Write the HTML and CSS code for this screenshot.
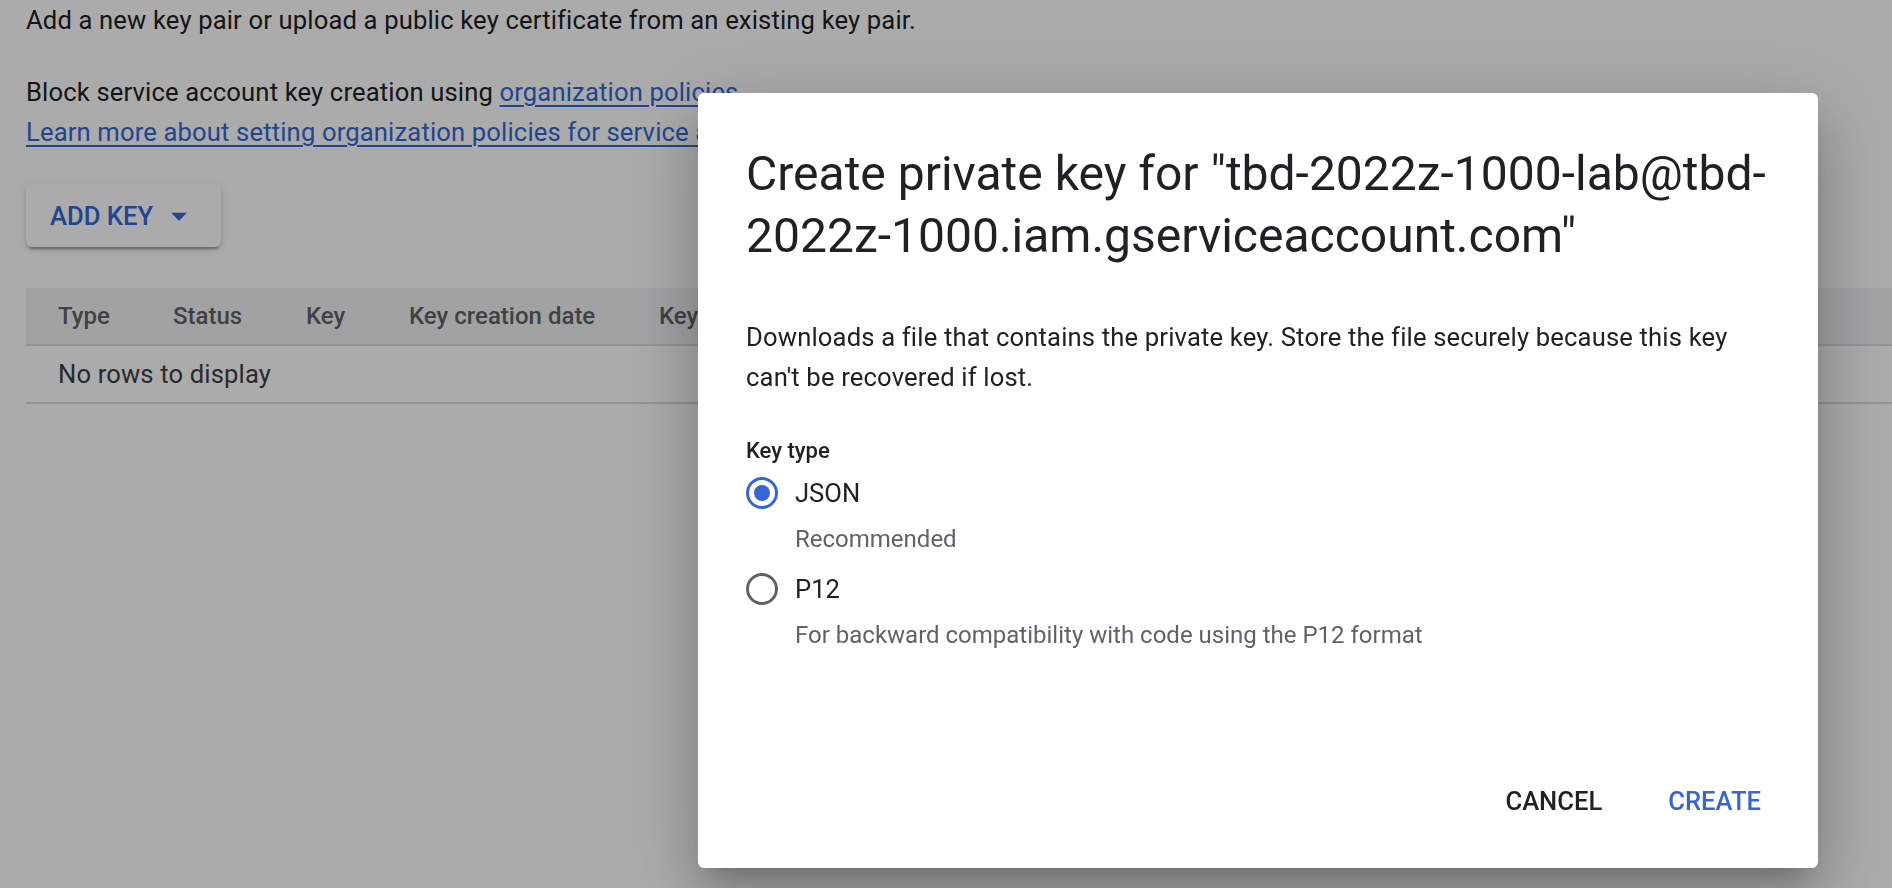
FILE: index.html
```html
<!DOCTYPE html>
<html lang="en">
<head>
<meta charset="utf-8">
<title>Create private key</title>
<link rel="stylesheet" href="styles.css">
</head>
<body>
<div class="page">
  <p class="intro">Add a new key pair or upload a public key certificate from an existing key pair.</p>
  <p class="policy">Block service account key creation using <a class="link" href="#">organization policies</a>.<br><a class="link" href="#">Learn more about setting organization policies for service accounts</a></p>
  <button class="add-key" type="button">ADD KEY<svg class="caret" viewBox="0 0 24 24" aria-hidden="true"><path d="M7 10l5 5 5-5z"/></svg></button>
  <div class="table">
    <div class="thead">
      <div class="th">Type</div>
      <div class="th">Status</div>
      <div class="th">Key</div>
      <div class="th">Key creation date</div>
      <div class="th">Key expiration date</div>
    </div>
    <div class="empty">No rows to display</div>
  </div>
</div>
<div class="scrim"></div>
<div class="dialog" role="dialog">
  <h2 class="title">Create private key for "tbd-2022z-1000-lab@tbd-2022z-1000.iam.gserviceaccount.com"</h2>
  <div class="content">
    <p class="desc">Downloads a file that contains the private key. Store the file securely because this key can't be recovered if lost.</p>
    <div class="label">Key type</div>
    <div class="options">
      <div class="option">
        <div class="option-row"><span class="radio checked"></span><span class="option-label">JSON</span></div>
        <div class="hint">Recommended</div>
      </div>
      <div class="option">
        <div class="option-row"><span class="radio"></span><span class="option-label">P12</span></div>
        <div class="hint">For backward compatibility with code using the P12 format</div>
      </div>
    </div>
  </div>
  <div class="actions">
    <button class="btn cancel" type="button">CANCEL</button>
    <button class="btn create" type="button">CREATE</button>
  </div>
</div>
</body>
</html>
```
FILE: styles.css
```css
html, body {
  margin: 0;
  padding: 0;
}
body {
  width: 1892px;
  height: 888px;
  overflow: hidden;
  background: #ffffff;
  color: #202124;
  font-family: Roboto, "Noto Sans", "Liberation Sans", sans-serif;
}
.page {
  padding: 0 0 0 26px;
}
.intro,
.policy {
  margin: 0;
  font-size: 25.6px;
  letter-spacing: 0.15px;
  line-height: 40px;
}
.policy {
  margin-top: 32px;
}
.link {
  color: #3367d6;
  text-decoration: underline;
  text-decoration-thickness: 2px;
  text-underline-offset: 4px;
}
.add-key {
  display: flex;
  align-items: center;
  width: fit-content;
  height: 63px;
  margin-top: 32px;
  padding: 0 23px 0 24px;
  border: none;
  border-radius: 6px;
  background: #ffffff;
  color: #3367d6;
  font-family: inherit;
  font-size: 25.6px;
  font-weight: 500;
  box-shadow: 0 5px 2px -3px rgba(0,0,0,.2), 0 3px 3px 0 rgba(0,0,0,.14), 0 2px 8px 0 rgba(0,0,0,.12);
}
.caret {
  width: 38px;
  height: 38px;
  margin-left: 7px;
  fill: #3367d6;
}
.table {
  margin-top: 41px;
}
.thead {
  display: grid;
  grid-template-columns: 115px 133px 103px 250px 1fr;
  align-items: center;
  height: 56px;
  padding-left: 32px;
  background: #f1f3f4;
  border-bottom: 2px solid #dadce0;
  color: #5f6368;
  font-size: 24px;
  font-weight: 500;
}
.th {
  white-space: nowrap;
}
.empty {
  display: flex;
  align-items: center;
  height: 56px;
  padding-left: 32px;
  border-bottom: 2px solid #dadce0;
  color: #3c4043;
  font-size: 25.6px;
  letter-spacing: 0.15px;
}
.scrim {
  position: fixed;
  inset: 0;
  background: rgba(0, 0, 0, 0.33);
}
.dialog {
  position: fixed;
  left: 698px;
  top: 93px;
  width: 1120px;
  height: 775px;
  box-sizing: border-box;
  display: flex;
  flex-direction: column;
  background: #ffffff;
  border-radius: 6px;
  box-shadow: 0 18px 24px -11px rgba(0,0,0,.2), 0 38px 61px 5px rgba(0,0,0,.14), 0 14px 74px 13px rgba(0,0,0,.12);
}
.title {
  margin: 0;
  padding: 50px 48px 0;
  font-size: 48px;
  font-weight: 400;
  line-height: 62.4px;
  color: #202124;
}
.content {
  margin-top: 49px;
  padding: 0 48px;
}
.desc {
  margin: 0;
  font-size: 25.6px;
  letter-spacing: 0.17px;
  line-height: 40px;
}
.label {
  margin-top: 38px;
  font-size: 22px;
  font-weight: 500;
  line-height: 32px;
}
.options {
  margin-top: 6px;
}
.option + .option {
  margin-top: 14.4px;
}
.option-row {
  display: flex;
  align-items: center;
  height: 40px;
}
.radio {
  display: flex;
  align-items: center;
  justify-content: center;
  width: 32px;
  height: 32px;
  box-sizing: border-box;
  margin-right: 17px;
  border: 3.2px solid #5f6368;
  border-radius: 50%;
}
.radio.checked {
  border-color: #3367d6;
}
.radio.checked::after {
  content: "";
  width: 16px;
  height: 16px;
  border-radius: 50%;
  background: #3367d6;
}
.option-label {
  font-size: 25.6px;
}
.hint {
  margin: 10px 0 0 49px;
  font-size: 24px;
  line-height: 32px;
  color: #5f6368;
}
.actions {
  display: flex;
  justify-content: flex-end;
  gap: 40px;
  margin-top: auto;
  padding: 0 44px 38px;
}
.btn {
  height: 58px;
  padding: 0 13px;
  border: none;
  background: transparent;
  font-family: inherit;
  font-size: 25.6px;
  font-weight: 500;
}
.cancel {
  color: #202124;
}
.create {
  color: #3367d6;
}
```
